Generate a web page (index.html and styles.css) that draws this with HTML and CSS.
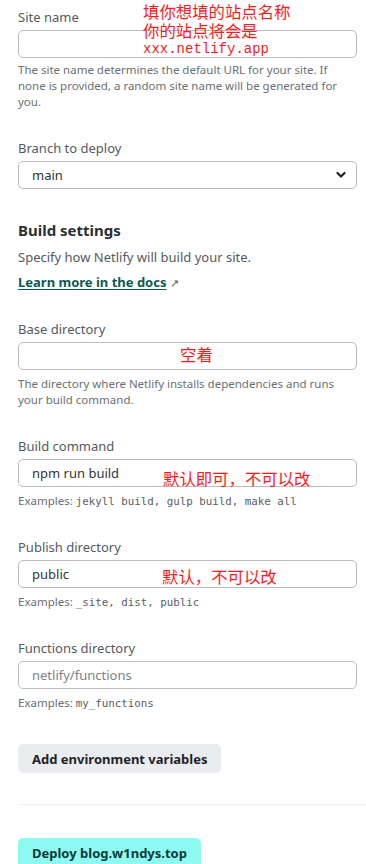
FILE: index.html
```html
<!DOCTYPE html>
<html lang="en">
<head>
<meta charset="UTF-8">
<title>Import an existing project</title>
<meta name="viewport" content="width=device-width, initial-scale=1.0">
<link rel="stylesheet" href="styles.css">
</head>
<body>
  <div class="page">
    <div class="field first">
      <label class="label">Site name</label>
      <div class="control">
        <input type="text" class="input">
        <div class="note note-site">
          <div>填你想填的站点名称</div>
          <div>你的站点将会是</div>
          <div class="mono-note">xxx.netlify.app</div>
        </div>
      </div>
      <p class="help tight">The site name determines the default URL for your site. If none is provided, a random site name will be generated for you.</p>
    </div>

    <div class="field">
      <label class="label">Branch to deploy</label>
      <div class="control">
        <div class="select">
          <span>main</span>
          <svg class="chevron" width="10" height="8" viewBox="0 0 10 8"><path d="M1.5 2 L5 5.5 L8.5 2" fill="none" stroke="#1f2428" stroke-width="2.2" stroke-linecap="round" stroke-linejoin="round"/></svg>
        </div>
      </div>
    </div>

    <section class="build">
      <h3>Build settings</h3>
      <p class="lead">Specify how Netlify will build your site.</p>
      <a class="docs" href="#">Learn more in the docs</a><span class="ext">↗</span>
    </section>

    <div class="field">
      <label class="label">Base directory</label>
      <div class="control">
        <input type="text" class="input">
        <div class="note note-base">空着</div>
      </div>
      <p class="help">The directory where Netlify installs dependencies and runs your build command.</p>
    </div>

    <div class="field">
      <label class="label">Build command</label>
      <div class="control">
        <input type="text" class="input" value="npm run build">
        <div class="note note-cmd">默认即可，不可以改</div>
      </div>
      <p class="help">Examples: <code>jekyll build, gulp build, make all</code></p>
    </div>

    <div class="field">
      <label class="label">Publish directory</label>
      <div class="control">
        <input type="text" class="input" value="public">
        <div class="note note-pub">默认，不可以改</div>
      </div>
      <p class="help">Examples: <code>_site, dist, public</code></p>
    </div>

    <div class="field">
      <label class="label">Functions directory</label>
      <div class="control">
        <input type="text" class="input" placeholder="netlify/functions">
      </div>
      <p class="help">Examples: <code>my_functions</code></p>
    </div>

    <button class="btn btn-env">Add environment variables</button>

    <hr class="sep">

    <button class="btn btn-deploy">Deploy blog.w1ndys.top</button>
  </div>
</body>
</html>
```

FILE: styles.css
```css
body {
  margin: 0;
  padding: 0;
  background: #fff;
  font-family: "Noto Sans", "Open Sans", sans-serif;
  color: #31363b;
}
.page {
  padding-left: 18px;
  overflow: hidden;
  height: 864px;
}
.field {
  margin-right: 9px;
  margin-bottom: 28px;
}
.field.first {
  padding-top: 7px;
}
.label {
  display: block;
  font-size: 13px;
  line-height: 20px;
  color: #545a61;
  margin-bottom: 3px;
}
.control {
  position: relative;
}
.input,
.select {
  box-sizing: border-box;
  display: block;
  width: 100%;
  height: 28px;
  border: 1px solid #b8bec4;
  border-radius: 5px;
  padding: 0 13px;
  font-family: inherit;
  font-size: 13px;
  color: #31363b;
  background: #fff;
  outline: none;
}
.input::placeholder {
  color: #7d8287;
}
.select {
  display: flex;
  align-items: center;
  justify-content: space-between;
  padding-right: 10px;
}
.help {
  margin: 6px 0 0;
  font-size: 11.5px;
  line-height: 16px;
  color: #6a7075;
}
.help.tight {
  margin-top: 4px;
}
.help code {
  font-family: "DejaVu Sans Mono", "Liberation Mono", monospace;
  font-size: 10.8px;
  line-height: 1;
  color: #5a6065;
}
.note {
  position: absolute;
  color: #ff1a1a;
  font-family: "Noto Sans CJK SC", sans-serif;
  font-size: 16.4px;
  line-height: 19px;
  white-space: nowrap;
}
.mono-note {
  font-family: "Liberation Mono", monospace;
  font-size: 14px;
}
.note-site {
  left: 125px;
  top: -28px;
}
.note-base {
  left: 162px;
  top: 3px;
}
.note-cmd {
  left: 145px;
  top: 10px;
}
.note-pub {
  left: 144px;
  top: 7px;
}
.build {
  margin: 31px 0 27px;
  font-size: 13px;
  line-height: 20px;
}
.build h3 {
  margin: 0;
  font-size: 15px;
  line-height: 20px;
  font-weight: 700;
  color: #2b3034;
}
.lead {
  margin: 7px 0 5px;
  color: #545a61;
}
.docs {
  font-weight: 700;
  color: #0b5a52;
  text-decoration: underline;
  text-underline-offset: 2px;
}
.ext {
  margin-left: 4px;
  font-size: 11px;
  line-height: 1;
  color: #555;
}
.btn {
  display: block;
  border: none;
  border-radius: 5px;
  font-family: inherit;
  font-weight: 700;
  font-size: 13px;
  padding: 0 14px;
  height: 29px;
  cursor: pointer;
}
.btn-env {
  margin-top: 33px;
  background: #ebecef;
  color: #1f2428;
}
.sep {
  border: none;
  border-top: 1px solid #eeeff1;
  margin: 31px 0 0;
}
.btn-deploy {
  margin-top: 33px;
  height: 30px;
  background: #8ffaf2;
  color: #0b3b37;
}
```
